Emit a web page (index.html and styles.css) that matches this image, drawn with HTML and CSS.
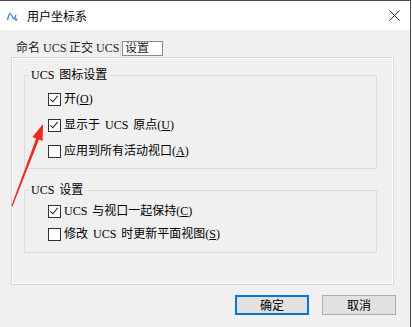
FILE: index.html
```html
<!DOCTYPE html>
<html lang="zh-CN">
<head>
    <meta charset="UTF-8">
    <title>用户坐标系</title>
    <link rel="stylesheet" href="styles.css">
</head>
<body>
    <div class="window">
        <div class="titlebar">
            <svg class="app-icon" width="12" height="12" viewBox="0 0 12 12">
                <path d="M1.5 10 Q3 3 4.5 4 T7 8 Q8.5 10 10 5" fill="none" stroke="#3b7fd6" stroke-width="1.3"/>
                <circle cx="4" cy="3" r="1.1" fill="#9cc0ef"/>
                <circle cx="10" cy="9.5" r="1.2" fill="#3b7fd6"/>
            </svg>
            <span class="title">用户坐标系</span>
            <svg class="close" width="11" height="11" viewBox="0 0 11 11">
                <path d="M0.5 0.5 L10.5 10.5 M10.5 0.5 L0.5 10.5" stroke="#333" stroke-width="1"/>
            </svg>
        </div>

        <div class="content">
            <div class="tabs">
                <div class="tab named">命名 UCS</div>
                <div class="tab ortho">正交 UCS</div>
                <div class="tab active">设置</div>
            </div>

            <div class="panel">
                <fieldset class="group first">
                    <legend>UCS 图标设置</legend>
                    <div class="rows">
                        <label class="row"><span class="box checked"></span>开(<u>O</u>)</label>
                        <label class="row"><span class="box checked"></span>显示于 UCS 原点(<u>U</u>)</label>
                        <label class="row"><span class="box"></span>应用到所有活动视口(<u>A</u>)</label>
                    </div>
                </fieldset>

                <fieldset class="group second">
                    <legend>UCS 设置</legend>
                    <div class="rows tight">
                        <label class="row"><span class="box checked"></span>UCS 与视口一起保持(<u>C</u>)</label>
                        <label class="row"><span class="box"></span>修改 UCS 时更新平面视图(<u>S</u>)</label>
                    </div>
                </fieldset>
            </div>

            <div class="buttons">
                <button class="btn default">确定</button>
                <button class="btn">取消</button>
            </div>
        </div>

        <!-- annotation arrow drawn on top of the dialog -->
        <svg class="arrow" width="412" height="327" viewBox="0 0 412 327">
            <polygon points="43,124 42.6,141 39,139.6 12.6,206.3 11.4,205.7 36.2,138.5 32.4,137.1" fill="#ec2a22"/>
        </svg>
    </div>
</body>
</html>
```

FILE: styles.css
```css
html, body {
    margin: 0;
    padding: 0;
    background-color: #fff;
}
.window {
    position: relative;
    width: 410px;
    height: 327px;
    border-right: 1px solid #4a4a4a;
    background-color: #f0f0f0;
    font-family: "Liberation Serif", "Noto Sans CJK SC", serif;
    font-size: 12px;
    word-spacing: 2px;
    color: #000;
    overflow: hidden;
}
.titlebar {
    height: 29px;
    border-top: 1px solid #4a4a4a;
    background-color: #fff;
    display: flex;
    align-items: center;
    padding-left: 6px;
    word-spacing: 0;
}
.app-icon {
    margin-right: 9px;
}
.title {
    font-family: "Noto Sans CJK SC", sans-serif;
    font-size: 12px;
    flex: 1;
}
.close {
    margin-right: 10px;
}
.content {
    padding: 11px 0 0 11px;
}
.tabs {
    display: flex;
    align-items: stretch;
    height: 16px;
    padding-left: 3px;
    word-spacing: 0;
}
.tab {
    box-sizing: border-box;
    padding-left: 2px;
    line-height: 15px;
    border-right: 1px solid #dcdcdc;
    color: #222;
    white-space: nowrap;
    overflow: hidden;
}
.tab.named {
    width: 53px;
}
.tab.ortho {
    width: 54px;
}
.tab.active {
    margin-left: 1px;
    width: 41px;
    height: 15px;
    line-height: 13px;
    border: 1px solid #8a8a8a;
    background-color: #fff;
}
.panel {
    width: 381px;
    height: 226px;
    border: 1px solid #d8d8d8;
    box-shadow: inset 1px 1px 0 #fff, inset -1px -1px 0 #fff;
}
.group {
    margin: 9px 16px 0 12px;
    padding: 0;
    border: 1px solid #dcdcdc;
    min-width: 0;
}
.group legend {
    margin-left: 4px;
    padding: 0 2px;
    line-height: 16px;
}
.group.first .rows {
    padding: 10px 0 10px 23px;
}
.group.second {
    margin-top: 13px;
}
.group.second .rows {
    padding: 7px 0 11px 23px;
}
.rows {
    display: flex;
    flex-direction: column;
    gap: 13px;
}
.rows.tight {
    gap: 10px;
}
.row {
    display: flex;
    align-items: center;
    height: 13px;
    line-height: 13px;
    white-space: pre;
}
.box {
    width: 11px;
    height: 11px;
    border: 1px solid #333;
    background-color: #fff;
    margin-right: 3px;
    flex: none;
    position: relative;
}
.box.checked::after {
    content: "";
    position: absolute;
    left: 3px;
    top: 0px;
    width: 3px;
    height: 7px;
    border-right: 1px solid #222;
    border-bottom: 1px solid #222;
    transform: rotate(40deg);
}
.buttons {
    display: flex;
    justify-content: flex-end;
    gap: 13px;
    padding: 10px 14px 0 0;
}
.btn {
    width: 74px;
    height: 20px;
    padding: 0;
    background-color: #e1e1e1;
    border: 1px solid #adadad;
    font-family: "Liberation Serif", "Noto Sans CJK SC", serif;
    font-size: 12px;
    color: #000;
}
.btn.default {
    border-color: #0078d7;
    box-shadow: inset 0 0 0 1px #0078d7;
}
.arrow {
    position: absolute;
    left: 0;
    top: 0;
    pointer-events: none;
}
```
